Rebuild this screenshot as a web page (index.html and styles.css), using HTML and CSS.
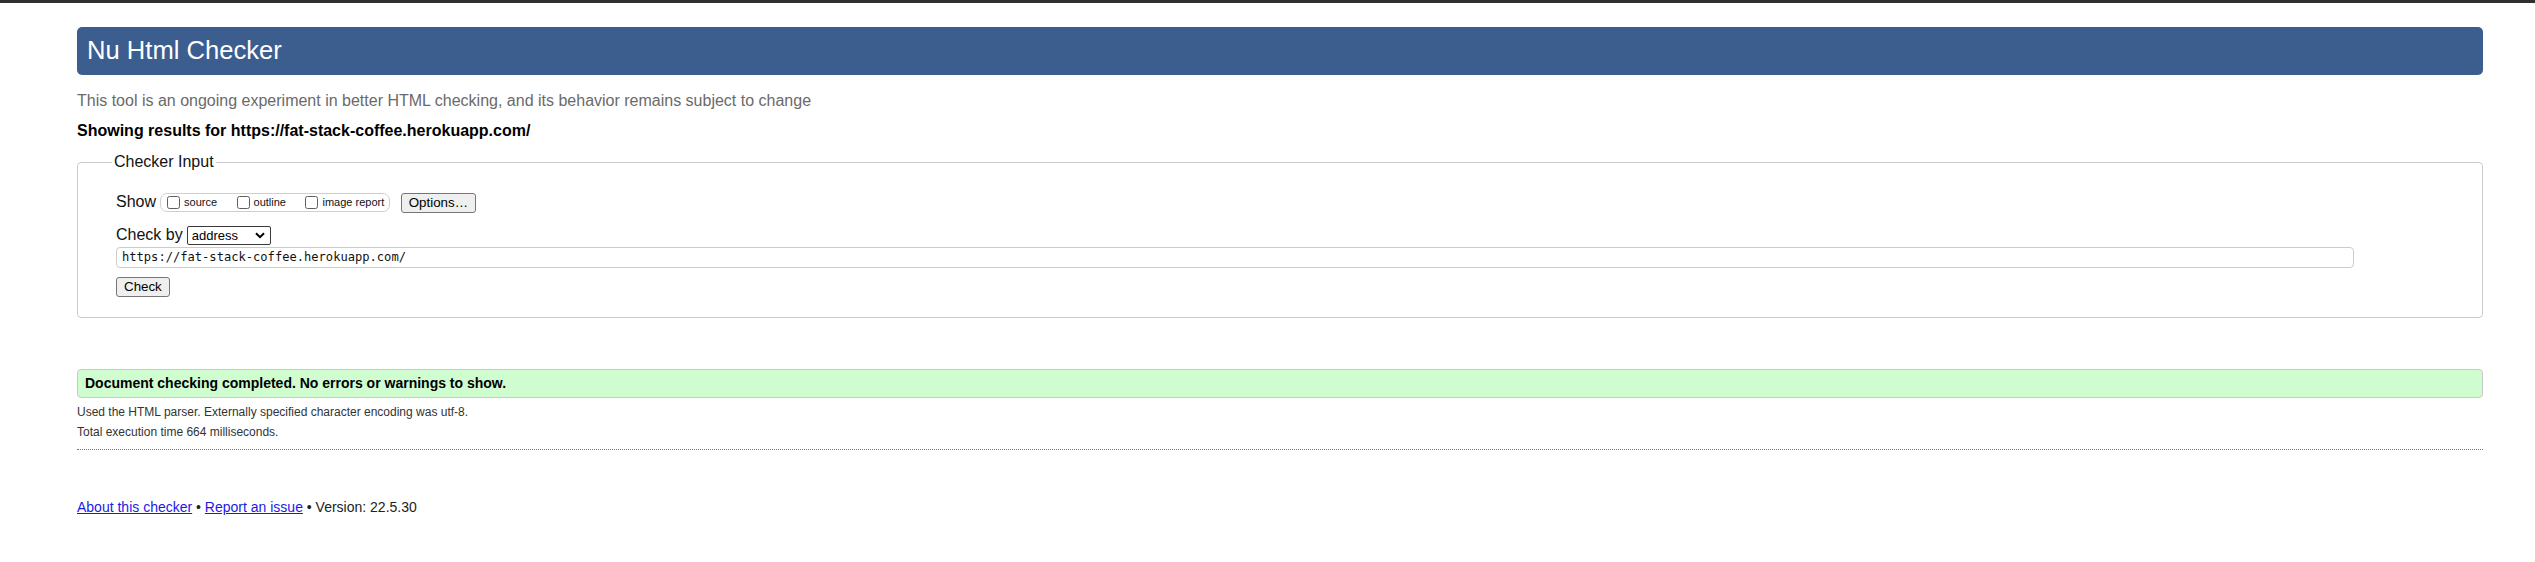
FILE: index.html
```html
<!DOCTYPE html>
<html lang="en">
<head>
<meta charset="utf-8">
<title>Showing results for https://fat-stack-coffee.herokuapp.com/ - Nu Html Checker</title>
<link rel="stylesheet" href="styles.css">
</head>
<body>
<main class="page">
  <h1 class="title">Nu Html Checker</h1>
  <p class="about">This tool is an ongoing experiment in better HTML checking, and its behavior remains subject to change</p>
  <p class="results-for">Showing results for https://fat-stack-coffee.herokuapp.com/</p>
  <form class="checker">
    <fieldset class="checker-input">
      <legend class="legend">Checker Input</legend>
      <div class="rows">
        <div class="row row-show">
          <span class="row-label">Show</span>
          <div class="show-box">
            <label class="opt"><span class="box"></span><span class="opt-text">source</span></label>
            <label class="opt"><span class="box"></span><span class="opt-text">outline</span></label>
            <label class="opt"><span class="box"></span><span class="opt-text">image report</span></label>
          </div>
          <span class="btn btn-options">Options…</span>
        </div>
        <div class="row row-by">
          <span class="row-label">Check by</span>
          <div class="select">
            <span class="select-text">address</span>
            <svg class="chevron" width="10" height="7" viewBox="0 0 10 7"><path d="M1 1.2 L5 5.2 L9 1.2" fill="none" stroke="#000" stroke-width="2"/></svg>
          </div>
        </div>
        <div class="url">https://fat-stack-coffee.herokuapp.com/</div>
        <div class="row row-check"><span class="btn btn-check">Check</span></div>
      </div>
    </fieldset>
  </form>
  <p class="success">Document checking completed. No errors or warnings to show.</p>
  <p class="meta meta-first">Used the HTML parser. Externally specified character encoding was utf-8.</p>
  <p class="meta">Total execution time 664 milliseconds.</p>
  <hr class="sep">
  <p class="footer"><a class="link" href="#about">About this checker</a> • <a class="link" href="#issue">Report an issue</a> • Version: 22.5.30</p>
</main>
</body>
</html>
```
FILE: styles.css
```css
html, body {
  margin: 0;
  padding: 0;
  background: #fff;
}
body {
  border-top: 3px solid #2f2f2f;
  font-family: "Liberation Sans", Arial, sans-serif;
  color: #000;
}
.page {
  margin: 0 52px 0 77px;
}
.title {
  margin: 24px 0 0;
  height: 48px;
  box-sizing: border-box;
  padding: 0 0 2px 10px;
  background: #3b5e8f;
  color: #fff;
  font-size: 25.6px;
  font-weight: normal;
  line-height: 46px;
  border-radius: 5px;
}
.about {
  margin: 16px 0 0;
  font-size: 16px;
  line-height: 20px;
  color: #6a6a6a;
}
.results-for {
  margin: 10px 0 0;
  font-size: 16px;
  line-height: 20px;
  font-weight: bold;
  color: #000;
}
.checker {
  margin: 11px 0 0;
}
.checker-input {
  margin: 0;
  padding: 0 0 20px 34px;
  border: 1px solid #cbcbcb;
  border-radius: 4px;
  min-width: 0;
}
.legend {
  padding: 0 2px;
  font-size: 16px;
  line-height: 20px;
  color: #111;
}
.rows {
  margin-left: 4px;
  display: flex;
  flex-direction: column;
  align-items: flex-start;
}
.row {
  display: flex;
  align-items: center;
}
.row-label {
  font-size: 16px;
  line-height: 19px;
  margin-bottom: 2px;
  color: #111;
}
.row-show {
  margin-top: 20px;
  height: 21px;
}
.show-box {
  margin-left: 4px;
  height: 19px;
  box-sizing: border-box;
  display: flex;
  align-items: center;
  gap: 19.5px;
  padding: 0 5px 0 6px;
  border: 1px solid #cfcfcf;
  border-radius: 7px;
}
.opt {
  display: flex;
  align-items: center;
}
.box {
  width: 13px;
  height: 13px;
  box-sizing: border-box;
  border: 1px solid #5f5f5f;
  border-radius: 2.5px;
  background: #fff;
}
.opt-text {
  margin-left: 4px;
  font-size: 11px;
  line-height: 13px;
  color: #111;
}
.btn {
  display: inline-block;
  box-sizing: border-box;
  height: 20px;
  padding: 0 6.5px;
  border: 1px solid #767676;
  border-radius: 3px;
  background: #efefef;
  font-size: 13.33px;
  line-height: 18px;
  color: #000;
}
.btn-options {
  margin-left: 11px;
}
.row-by {
  margin-top: 13px;
  height: 19px;
}
.select {
  margin-left: 4px;
  width: 84px;
  height: 19px;
  box-sizing: border-box;
  display: flex;
  align-items: center;
  justify-content: space-between;
  padding: 0 5px 0 4px;
  border: 1px solid #3a3a3a;
  border-radius: 2px;
  background: #fff;
}
.select-text {
  font-size: 13px;
  line-height: 17px;
  color: #000;
}
.chevron {
  display: block;
}
.url {
  margin-top: 2px;
  align-self: stretch;
  margin-right: 128px;
  height: 21px;
  box-sizing: border-box;
  padding: 0 5px;
  border: 1px solid #cccccc;
  border-radius: 4px;
  font-family: "DejaVu Sans Mono", "Liberation Mono", monospace;
  font-size: 12.1px;
  line-height: 19px;
  color: #111;
}
.row-check {
  margin-top: 9px;
}
.btn-check {
  padding: 0 7px;
}
.success {
  margin: 51px 0 0;
  height: 29px;
  box-sizing: border-box;
  padding: 0 7px;
  border: 1px solid #c9c9c9;
  border-radius: 4px;
  background: #d0fdd0;
  font-size: 14px;
  font-weight: bold;
  line-height: 27px;
  color: #000;
}
.meta {
  margin: 0;
  font-size: 12px;
  line-height: 20px;
  color: #333;
}
.meta-first {
  margin-top: 4px;
}
.sep {
  margin: 7px 0 0;
  height: 0;
  border: 0;
  border-top: 1px dotted #777;
}
.footer {
  margin: 47px 0 0;
  font-size: 14px;
  line-height: 20px;
  color: #222;
}
.link {
  color: #1a1ae6;
  text-decoration: underline;
}
```
